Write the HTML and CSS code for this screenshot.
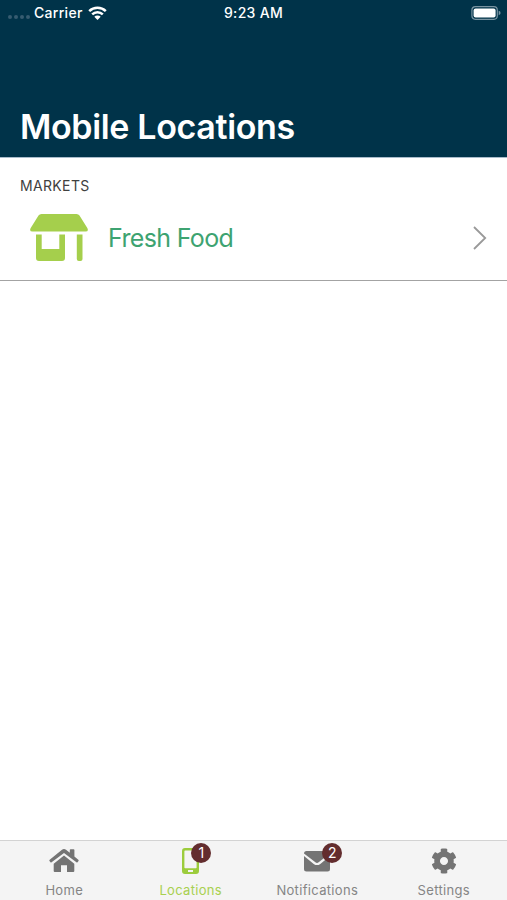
FILE: index.html
```html
<!DOCTYPE html>
<html lang="en">
<head>
    <meta charset="UTF-8">
    <meta name="viewport" content="width=device-width, initial-scale=1.0">
    <title>Mobile Locations</title>
    <link rel="stylesheet" href="styles.css">
</head>
<body>
    <header class="header">
        <div class="status-bar">
            <div class="status-left">
                <span class="signal"><i></i><i></i><i></i><i></i></span>
                <span class="carrier">Carrier</span>
                <svg class="wifi" viewBox="0 0 19 14" width="19" height="14">
                    <path d="M1.200 5.200a11.800 11.800 0 0 1 16.600 0M4.200 8.400a7.500 7.500 0 0 1 10.600 0" fill="none" stroke="#fff" stroke-width="2.500"/>
                    <path d="M6.300 10.700a4.600 4.600 0 0 1 6.400 0L9.500 14z" fill="#fff"/>
                </svg>
            </div>
            <span class="time">9:23 AM</span>
            <div class="status-right">
                <svg viewBox="0 0 30 14" width="30" height="14">
                    <rect x="0.9" y="0.7" width="25.4" height="12.6" rx="3.5" fill="none" stroke="#7893a1" stroke-width="1.2"/>
                    <rect x="2.6" y="2.4" width="22" height="9.2" rx="2" fill="#fff"/>
                    <path d="M27.700 4.800q1.900 0.600 1.900 2.200t-1.900 2.200z" fill="#7893a1"/>
                </svg>
            </div>
        </div>
        <h1>Mobile Locations</h1>
    </header>

    <main class="content">
        <h2>MARKETS</h2>
        <a href="#" class="market">
            <svg class="store" viewBox="0 0 58 48" width="58" height="48">
                <path d="M11.500 0h35q2 0 3 1.600l7.800 12.400q1.700 3.500-1.800 3.500h-53q-3.500 0-1.800-3.500L8.500 1.600q1-1.600 3-1.600z"/>
                <path d="M6 20.500h5.700v14.500h17.600V20.500H35v23.500q0 3-3 3H9q-3 0-3-3z"/>
                <path d="M46.800 20.500h5.700v24.500q0 2-2 2h-1.700q-2 0-2-2z"/>
            </svg>
            <span class="market-name">Fresh Food</span>
            <svg class="chevron" viewBox="0 0 14 24" width="14" height="24">
                <path d="M1 1l11.200 11L1 23"/>
            </svg>
        </a>
    </main>

    <nav class="tab-bar">
        <a href="#" class="tab">
            <div class="tab-icon">
                <svg viewBox="0 0 30 26" width="30" height="26">
                    <path d="M15 7.400L25.300 15.700V23q0 1-1 1h-6.300v-6.700h-6V24H5.700q-1 0-1-1V15.700z"/>
                    <path d="M15 1q1.100 0 2 .7l3.800 3.100V2q0-.8.800-.8h3q.8 0 .8.800v6.500l3.900 3.200q.7.600.2 1.300l-1 1.200q-.5.500-1.100 0L15 4.900 2.600 14.200q-.6.500-1.100 0L.5 13q-.5-.7.200-1.300L13 1.700q.9-.7 2-.7z"/>
                </svg>
            </div>
            <span>Home</span>
        </a>
        <a href="#" class="tab active">
            <div class="tab-icon">
                <svg viewBox="0 0 17 26" width="17" height="26">
                    <path fill-rule="evenodd" d="M3 0h11q3 0 3 3v20q0 3-3 3H3q-3 0-3-3V3q0-3 3-3zM3.200 2.400q-.8 0-.8.800v16.200q0 .8.800.8h10.600q.8 0 .8-.8V3.200q0-.8-.8-.8zM6 22.100v1.800h5v-1.800z"/>
                </svg>
                <span class="badge">1</span>
            </div>
            <span>Locations</span>
        </a>
        <a href="#" class="tab">
            <div class="tab-icon">
                <svg viewBox="0 0 26 26" width="26" height="26">
                    <path d="M2.500 3h21q2.500 0 2.500 2.600L14.600 14.300q-1.600 1.200-3.200 0L0 5.600Q0 3 2.500 3z"/>
                    <path d="M0 8.100l9.700 7.800q3.300 2.400 6.600 0L26 8.100V21q0 2.500-2.500 2.500h-21Q0 23.500 0 21z"/>
                </svg>
                <span class="badge">2</span>
            </div>
            <span>Notifications</span>
        </a>
        <a href="#" class="tab">
            <div class="tab-icon">
                <svg viewBox="0 0 512 512" width="26" height="26">
                    <path d="M487.400 315.700l-42.600-24.600c4.300-23.200 4.300-47 0-70.200l42.600-24.600c4.900-2.800 7.100-8.600 5.500-14-11.100-35.600-30-67.800-54.700-94.600-3.800-4.100-10-5.100-14.800-2.300L380.800 110c-17.900-15.400-38.500-27.300-60.800-35.100V25.800c0-5.600-3.900-10.500-9.400-11.700-36.700-8.200-74.300-7.800-109.200 0-5.500 1.200-9.400 6.100-9.400 11.700V75c-22.200 7.900-42.800 19.800-60.800 35.100L88.700 85.500c-4.900-2.800-11-1.900-14.800 2.300-24.700 26.700-43.600 58.900-54.700 94.600-1.700 5.400.6 11.200 5.500 14L67.300 221c-4.300 23.200-4.300 47 0 70.200l-42.600 24.600c-4.900 2.800-7.100 8.600-5.500 14 11.100 35.600 30 67.800 54.700 94.600 3.800 4.100 10 5.100 14.800 2.300l42.600-24.600c17.900 15.400 38.500 27.300 60.800 35.100v49.200c0 5.600 3.900 10.500 9.400 11.700 36.700 8.200 74.300 7.800 109.200 0 5.500-1.200 9.400-6.100 9.400-11.700v-49.200c22.200-7.900 42.800-19.800 60.800-35.100l42.600 24.600c4.900 2.800 11 1.900 14.800-2.300 24.700-26.700 43.600-58.900 54.700-94.600 1.500-5.500-.7-11.300-5.600-14.100zM256 336c-44.100 0-80-35.900-80-80s35.900-80 80-80 80 35.900 80 80-35.900 80-80 80z"/>
                </svg>
            </div>
            <span>Settings</span>
        </a>
    </nav>
</body>
</html>
```
FILE: styles.css
```css
/* General body styling */
* {
    box-sizing: border-box;
}

body {
    font-family: Inter, "Liberation Sans", sans-serif;
    margin: 0;
    height: 900px;
    display: flex;
    flex-direction: column;
    background-color: #ffffff;
}

a {
    color: inherit;
    text-decoration: none;
}

svg {
    display: block;
    flex-shrink: 0;
}

/* Header styling */
.header {
    height: 158px;
    background-color: #003349;
    color: #ffffff;
    border-bottom: 1px solid #a9bccb;
}

.status-bar {
    display: grid;
    grid-template-columns: 1fr auto 1fr;
    align-items: center;
    height: 26px;
    padding: 0 6px 0 8px;
    font-size: 14px;
    font-weight: 500;
    line-height: 16px;
    letter-spacing: 0.3px;
}

.status-left {
    display: flex;
    align-items: center;
}

.signal {
    display: flex;
    gap: 2px;
    width: 26px;
    padding-top: 8px;
}

.signal i {
    width: 4px;
    height: 4px;
    border-radius: 50%;
    background-color: #365c70;
}

.wifi {
    margin-left: 5px;
}

.time {
    margin-right: 2px;
}

.status-right {
    display: flex;
    justify-content: flex-end;
}

.header h1 {
    margin: 80px 0 0 20px;
    font-size: 34px;
    font-weight: 600;
    line-height: 42px;
    letter-spacing: -0.35px;
}

/* Market list styling */
.content {
    flex: 1;
}

.content h2 {
    margin: 0;
    padding: 18px 0 0 20px;
    font-size: 14px;
    font-weight: 400;
    line-height: 20px;
    letter-spacing: 0.35px;
    color: #404040;
}

.market {
    display: flex;
    align-items: center;
    height: 85px;
    padding: 0 20px 0 30px;
    border-bottom: 1px solid #a3a3a3;
}

.store {
    fill: #a5cf4c;
}

.market-name {
    flex: 1;
    margin-left: 20px;
    font-size: 25px;
    letter-spacing: -0.65px;
    color: #3da371;
}

.chevron {
    fill: none;
    stroke: #999999;
    stroke-width: 1.8;
}

/* Tab bar styling */
.tab-bar {
    display: flex;
    height: 60px;
    padding-left: 1px;
    background-color: #f4f4f4;
    border-top: 1px solid #d3d3d3;
}

.tab {
    flex: 1;
    display: flex;
    flex-direction: column;
    align-items: center;
    padding-top: 7px;
    font-size: 13px;
    line-height: 16px;
    letter-spacing: 0.32px;
    color: #858585;
    fill: #747474;
}

.tab.active {
    color: #a8d04f;
    fill: #9ccc3c;
}

.tab-icon {
    position: relative;
    margin-bottom: 8px;
}

/* Count badge over the tab icon */
.badge {
    position: absolute;
    top: -5px;
    right: -12px;
    width: 20px;
    height: 20px;
    border-radius: 50%;
    background-color: #632d2e;
    color: #ffffff;
    font-size: 14px;
    line-height: 20px;
    letter-spacing: 0;
    text-align: center;
}
```
